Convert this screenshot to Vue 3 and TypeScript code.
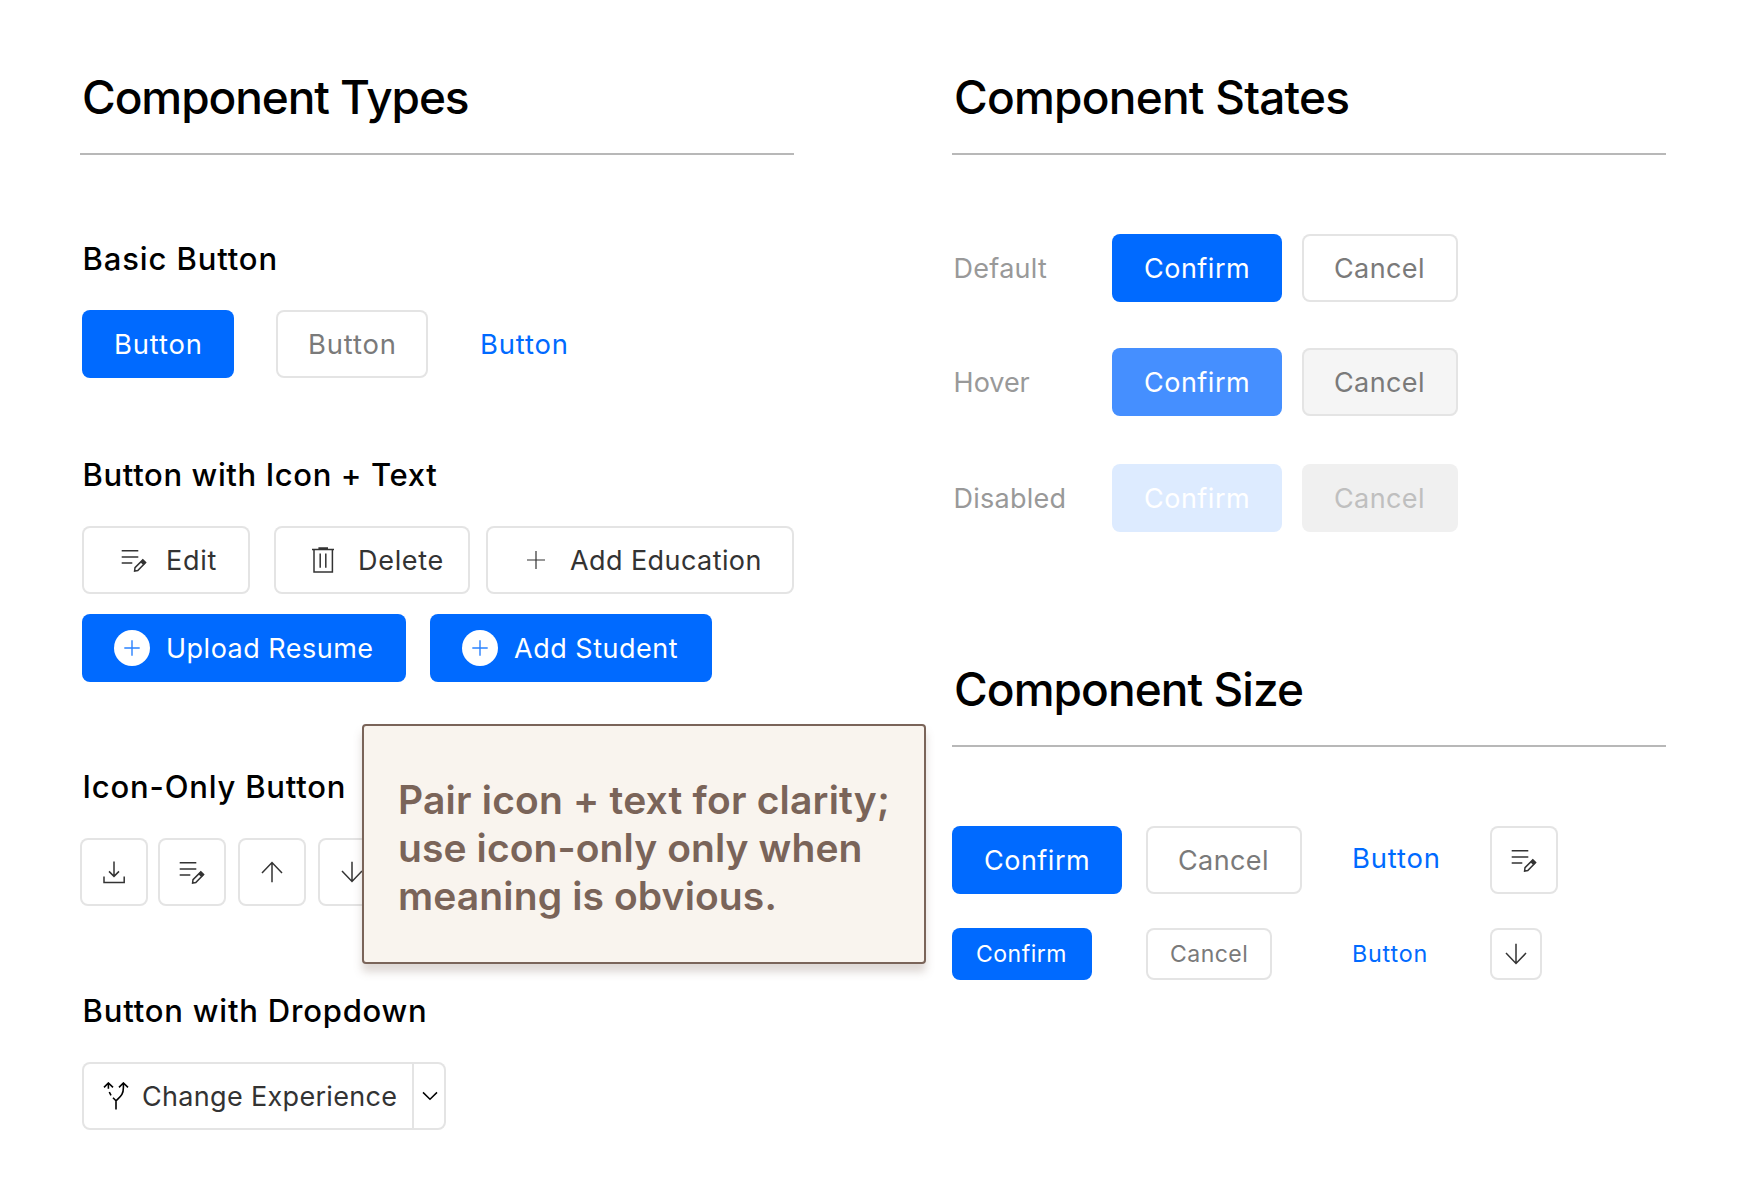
<script setup lang="ts">
import { h, type FunctionalComponent } from 'vue'

type IconName = 'edit' | 'trash' | 'plus' | 'download' | 'up' | 'down' | 'fork'

const icons: Record<IconName, { d: string; fill?: string }> = {
  edit: {
    d: 'M1.7 4.7H18.3M1.7 11H18.3M1.7 17H12.3M14.6 25.2L15 21.6L22.8 13.9L25.6 16.6L17.8 24.6Z',
    fill: 'M20.4 16.2L22.8 13.5L26 16.5L23.5 19.2Z'
  },
  trash: { d: 'M3 3.4H25M9.4 2H19M5 3.4V25.9H23.4V3.4M11.2 7.5V21.7M16.8 7.5V21.7' },
  plus: { d: 'M14 5V23M5 14H23' },
  download: { d: 'M14 3.4V18.4M9 13.4L14 18.4L19 13.4M4 18.4V24.4H24.2V18.4' },
  up: { d: 'M14 24.2V4.4M4 14.9L14 4.6L24 14.9' },
  down: { d: 'M14 3.8V23.6M4 13.1L14 23.4L24 13.1' },
  fork: {
    d: 'M2 5.4L6.4 1L11 5.4M17 5.4L21.4 1L26 5.4M21.4 1V5.5C21.4 12.6 18.6 14.2 14 18.8V27.4M6.4 1V6.8M7.3 10L9 13.4M11 15.8L14 18.8'
  }
}

const Icon: FunctionalComponent<{ name: IconName }> = (props) =>
  h('svg', { viewBox: '0 0 28 28', width: 28, height: 28, fill: 'none', stroke: 'currentColor', 'stroke-width': 1.5 }, [
    h('path', { d: icons[props.name].d }),
    icons[props.name].fill ? h('path', { d: icons[props.name].fill, fill: 'currentColor', stroke: 'none' }) : null
  ])
Icon.props = ['name']

const states = [
  { label: 'Default', key: 'default' },
  { label: 'Hover', key: 'hover' },
  { label: 'Disabled', key: 'disabled' }
]
const iconOnly: IconName[] = ['download', 'edit', 'up', 'down']
</script>

<template>
  <main class="page">
    <section class="column">
      <h1 class="types-title">Component Types</h1>

      <h2 class="basic-title">Basic Button</h2>
      <div class="row basic">
        <button class="btn primary word"><span>Button</span></button>
        <button class="btn outline word"><span>Button</span></button>
        <a class="link"><span>Button</span></a>
      </div>

      <h2 class="icon-text-title">Button with Icon + Text</h2>
      <div class="row icon-text">
        <button class="btn outline dark edit"><Icon name="edit" /><span>Edit</span></button>
        <button class="btn outline dark delete"><Icon name="trash" /><span>Delete</span></button>
        <button class="btn outline dark education"><Icon name="plus" class="thin" /><span>Add Education</span></button>
      </div>
      <div class="row icon-fill">
        <button class="btn primary upload">
          <i class="disc"><svg viewBox="0 0 36 36" width="36" height="36"><path d="M18 10.3V25.7M10.3 18H25.7" /></svg></i>
          <span>Upload Resume</span>
        </button>
        <button class="btn primary student">
          <i class="disc"><svg viewBox="0 0 36 36" width="36" height="36"><path d="M18 10.3V25.7M10.3 18H25.7" /></svg></i>
          <span>Add Student</span>
        </button>
      </div>

      <h2 class="icon-only-title">Icon-Only Button</h2>
      <div class="row icon-only">
        <button v-for="name in iconOnly" :key="name" class="btn outline dark square"><Icon :name="name" /></button>
      </div>

      <h2 class="dropdown-title">Button with Dropdown</h2>
      <div class="btn outline dark dropdown">
        <Icon name="fork" class="fork" />
        <span>Change Experience</span>
        <i class="toggle">
          <svg viewBox="0 0 16 10" width="16" height="10"><path d="M1 1.4L8 8.2L15 1.4" /></svg>
        </i>
      </div>
    </section>

    <section class="column">
      <h1 class="states-title">Component States</h1>
      <div class="states">
        <div v-for="s in states" :key="s.key" class="state" :class="s.key">
          <label>{{ s.label }}</label>
          <button class="btn primary confirm"><span>Confirm</span></button>
          <button class="btn outline cancel"><span>Cancel</span></button>
        </div>
      </div>

      <h1 class="size-title">Component Size</h1>
      <div class="sizes large">
        <button class="btn primary confirm"><span>Confirm</span></button>
        <button class="btn outline cancel"><span>Cancel</span></button>
        <a class="link"><span>Button</span></a>
        <button class="btn outline dark square"><Icon name="edit" /></button>
      </div>
      <div class="sizes small">
        <button class="btn primary confirm"><span>Confirm</span></button>
        <button class="btn outline cancel"><span>Cancel</span></button>
        <a class="link"><span>Button</span></a>
        <button class="btn outline dark square"><Icon name="down" /></button>
      </div>
    </section>

    <aside class="note">
      <p class="l1">Pair icon + text for clarity;</p>
      <p class="l2">use icon-only only when</p>
      <p class="l3">meaning is obvious.</p>
    </aside>
  </main>
</template>

<style>
body { margin: 0; background: #fff; }
</style>

<style scoped>
.page {
  position: relative;
  box-sizing: border-box;
  width: 1744px;
  height: 1196px;
  padding: 69px 78px 0 80px;
  display: grid;
  grid-template-columns: 714px 714px;
  justify-content: space-between;
  align-items: start;
  font-family: Inter, "Noto Sans", sans-serif;
  color: #000;
  overflow: hidden;
}
h1, h2, p { margin: 0; white-space: nowrap; }
h1 {
  height: 84px;
  padding-left: 2px;
  border-bottom: 2px solid #b8b8b8;
  font-size: 46px;
  line-height: 56px;
  font-weight: 500;
}
.types-title { letter-spacing: -1.08px; }
.states-title { letter-spacing: -0.77px; }
.size-title { letter-spacing: -0.93px; margin-top: 129px; }

h2 {
  padding-left: 2.6px;
  font-size: 31px;
  line-height: 37px;
  font-weight: 500;
}
.basic-title { margin-top: 85px; letter-spacing: 0.87px; }
.icon-text-title { margin-top: 78px; letter-spacing: 0.63px; }
.icon-only-title { margin-top: 86px; letter-spacing: 0.8px; }
.dropdown-title { margin-top: 86px; letter-spacing: 0.8px; }

.row { display: flex; height: 68px; padding-left: 2px; }
.basic, .icon-text { margin-top: 33px; }
.icon-fill { margin-top: 20px; }

.btn {
  box-sizing: border-box;
  height: 68px;
  margin: 0;
  padding: 0 0 0 32px;
  border: 0;
  border-radius: 8px;
  display: flex;
  align-items: center;
  flex: none;
  font: 400 27px/33px Inter, "Noto Sans", sans-serif;
  text-align: left;
  white-space: nowrap;
}
.btn svg { display: block; flex: none; }
.btn span, .link span { margin-top: 1px; }
.primary { background: #006aff; color: #fff; }
.outline { background: #fff; box-shadow: inset 0 0 0 2px #e4e4e4; color: #7a7a7a; }
.dark { color: #333; }
.link {
  color: #006aff;
  font-size: 27.4px;
  line-height: 33px;
  letter-spacing: 0.85px;
  display: flex;
  align-items: center;
}

.word { width: 152px; font-size: 27.4px; letter-spacing: 0.85px; }
.word + .word { margin-left: 42px; }
.basic .link { margin-left: 52px; }

.edit { width: 168px; padding-left: 38px; gap: 18px; letter-spacing: 0.77px; }
.delete { width: 196px; padding-left: 35px; gap: 21px; margin-left: 24px; letter-spacing: 0.7px; }
.education { width: 308px; padding-left: 36px; gap: 20px; margin-left: 16px; letter-spacing: 0.42px; }
.thin { stroke-width: 1.2; }
.upload { width: 324px; gap: 16px; letter-spacing: 0.49px; }
.student { width: 282px; gap: 16px; margin-left: 24px; letter-spacing: 0.52px; }
.disc { width: 36px; height: 36px; border-radius: 50%; background: #fff; flex: none; }
.disc path { stroke: #2a82ff; stroke-width: 1.4; fill: none; }

.square { width: 68px; padding: 0; justify-content: center; }
.icon-only { margin-top: 33px; padding: 0; gap: 12px; }
.icon-only .square:nth-child(2) { margin-left: -2px; }

.dropdown { width: 364px; margin: 33px 0 0 2px; padding-left: 20px; letter-spacing: 0.32px; }
.dropdown span { width: 269px; margin-left: 12px; }
.fork { color: #000; stroke-width: 1.6; }
.toggle {
  box-sizing: border-box;
  width: 34px;
  height: 64px;
  margin-left: 1px;
  border-left: 2px solid #e4e4e4;
  display: flex;
  align-items: center;
  justify-content: center;
}
.toggle path { fill: none; stroke: #000; stroke-width: 1.5; }

.states { margin-top: 79px; }
.state { display: flex; align-items: center; }
.state + .state { margin-top: 46px; }
.state.disabled { margin-top: 48px; }
.state label {
  box-sizing: border-box;
  width: 160px;
  padding: 1px 0 0 1.6px;
  font-size: 27px;
  line-height: 33px;
  font-weight: 400;
  letter-spacing: 0.25px;
  color: #999;
}
.state.hover label { letter-spacing: -0.03px; }
.state .cancel { margin-left: 20px; }
.confirm { width: 170px; letter-spacing: 0.5px; }
.cancel { width: 156px; letter-spacing: 0.4px; }
.hover .primary { background: #458fff; }
.hover .outline { background: #f5f5f5; }
.disabled .primary { background: #ddebff; }
.disabled .outline { background: #f0f0f0; box-shadow: none; color: #bfbfbf; }

.sizes { display: grid; grid-template-columns: 194px 206px 138px auto; justify-content: start; }
.large { margin-top: 79px; }
.large .link { margin-top: -4px; }
.small { margin-top: 34px; }
.small .btn { height: 52px; padding-left: 24px; font-size: 23px; line-height: 28px; }
.small .link { font-size: 23.3px; line-height: 28px; letter-spacing: 0.8px; }
.small span { margin-top: 0; }
.small .confirm { width: 140px; letter-spacing: 0.5px; }
.small .cancel { width: 126px; letter-spacing: 0.46px; }
.small .square { width: 52px; padding: 0; }

.note {
  position: absolute;
  left: 362px;
  top: 724px;
  box-sizing: border-box;
  width: 564px;
  height: 240px;
  padding: 50px 0 0 34px;
  border: 2px solid #7a6459;
  border-radius: 4px;
  background: #f9f4ee;
  box-shadow: 0 8px 8px rgba(122, 100, 89, 0.25);
  color: #7a6459;
  font-size: 39px;
  line-height: 48px;
  font-weight: 600;
}
.l1 { letter-spacing: 0.2px; }
.l2 { letter-spacing: 0.1px; }
.l3 { letter-spacing: 0.13px; }
</style>
